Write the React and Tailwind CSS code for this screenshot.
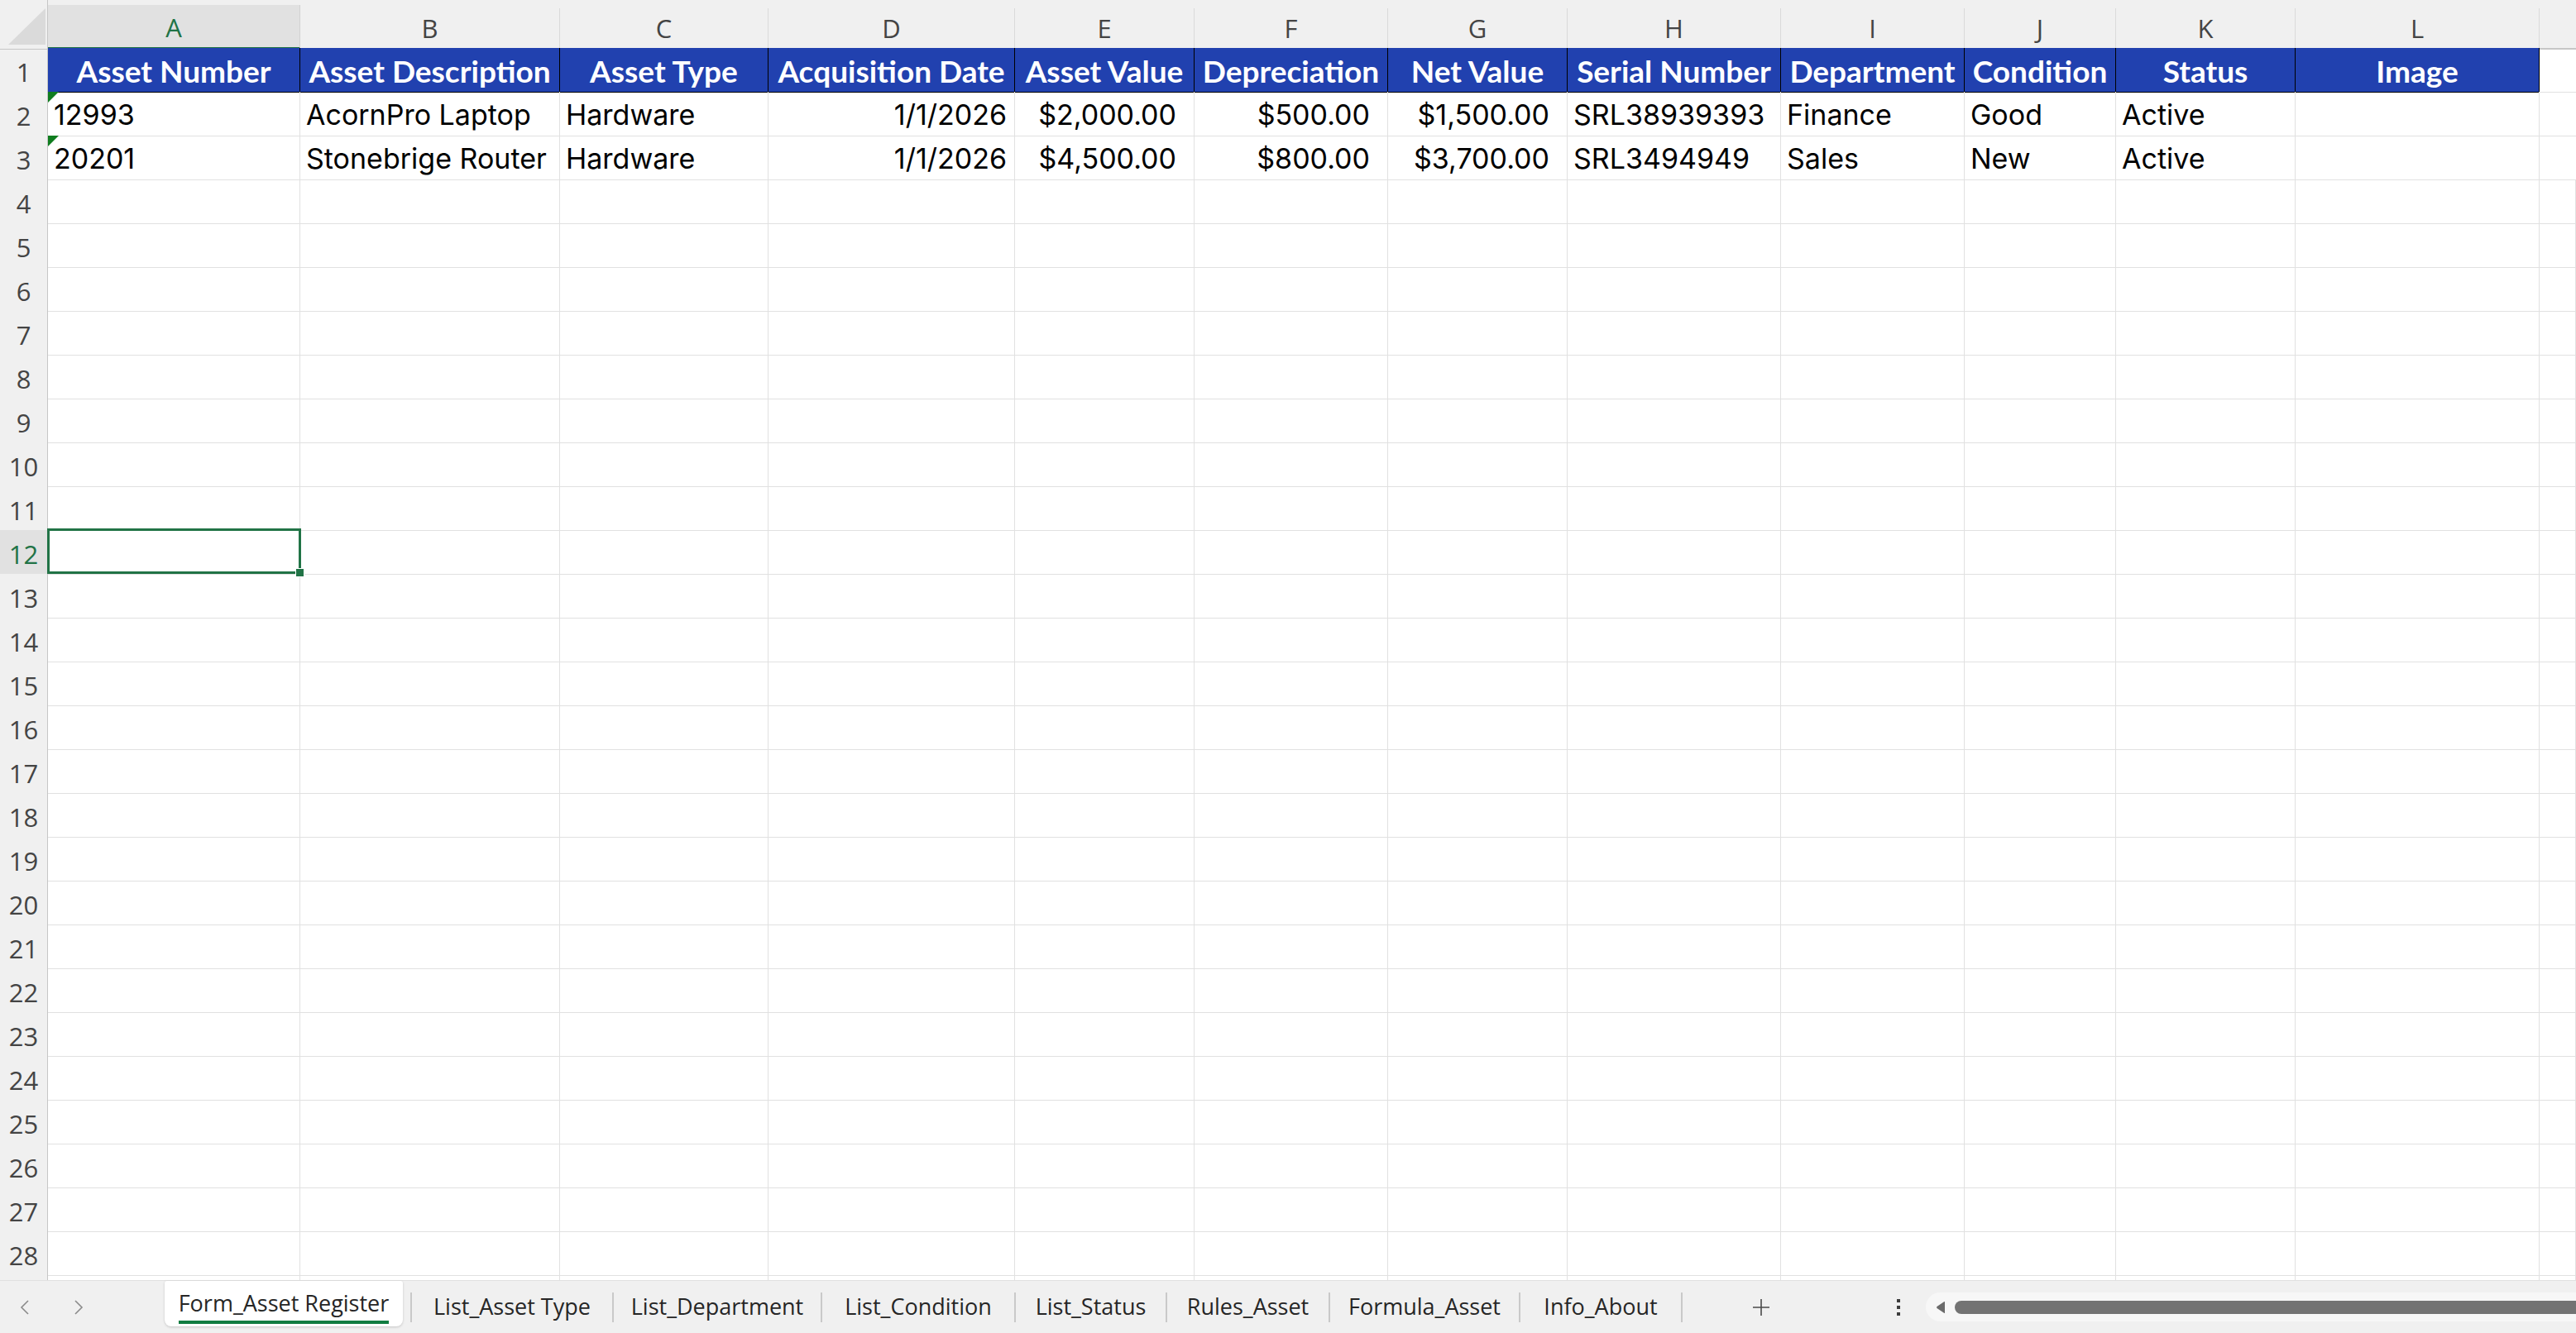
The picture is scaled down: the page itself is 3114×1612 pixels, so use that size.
import React from "react";

const GRID =
  "grid grid-cols-[58px_305px_314px_252px_298px_217px_234px_217px_258px_222px_183px_217px_295px_1fr]";

const LETTERS = ["A", "B", "C", "D", "E", "F", "G", "H", "I", "J", "K", "L"];
const HEADERS = [
  "Asset Number",
  "Asset Description",
  "Asset Type",
  "Acquisition Date",
  "Asset Value",
  "Depreciation",
  "Net Value",
  "Serial Number",
  "Department",
  "Condition",
  "Status",
  "Image",
];
const DATA = [
  ["12993", "AcornPro Laptop", "Hardware", "1/1/2026", "$2,000.00", "$500.00", "$1,500.00", "SRL38939393", "Finance", "Good", "Active", ""],
  ["20201", "Stonebrige Router", "Hardware", "1/1/2026", "$4,500.00", "$800.00", "$3,700.00", "SRL3494949", "Sales", "New", "Active", ""],
];

const uiFont = { fontFamily: '"Open Sans", "Noto Sans", sans-serif' };

function ColumnHeader() {
  return (
    <div className={`${GRID} h-[58px] shrink-0 bg-[#f0f0f0]`} style={uiFont}>
      <div className="relative border-r border-b border-[#c6c6c6]">
        <svg className="absolute inset-0" width="58" height="58" viewBox="0 0 58 58">
          <polygon points="10,54 55,54 55,10" fill="#dadada" />
        </svg>
      </div>
      {LETTERS.map((l, i) =>
        i === 0 ? (
          <div key={l} className="pt-[6px] flex flex-col">
            <div className="flex-1 bg-[#e1e1e1] border-r border-[#d2d2d2] border-b-[3px] border-b-[#217346] flex items-center justify-center pt-[4px] text-[31px] text-[#217346]">
              {l}
            </div>
          </div>
        ) : (
          <div key={l} className="pt-[10px] flex flex-col border-b-[2px] border-[#c6c6c6]">
            <div className="flex-1 border-r border-[#dadada] flex items-center justify-center text-[31px] text-[#444444]">
              {l}
            </div>
          </div>
        )
      )}
      <div className="border-b-[2px] border-[#c6c6c6]" />
    </div>
  );
}

function RowHead({ n, selected }) {
  return (
    <div
      className={`flex items-center justify-center pt-[6px] border-r border-r-[#c6c6c6] border-b border-b-[#dcdcdc] text-[31px] ${
        selected ? "bg-[#e1e1e1] text-[#217346]" : "bg-[#f0f0f0] text-[#444444]"
      }`}
      style={uiFont}
    >
      {n}
    </div>
  );
}

function HeaderRow() {
  return (
    <div className={`${GRID} h-[53px] shrink-0`}>
      <RowHead n={1} />
      {HEADERS.map((h) => (
        <div
          key={h}
          className="bg-[#2141af] border-r border-b border-black flex items-center justify-center pt-[3px] text-white font-bold text-[37px] whitespace-nowrap overflow-hidden leading-none"
          style={{ fontFamily: 'Lato, "Open Sans", sans-serif' }}
        >
          {h}
        </div>
      ))}
      <div className="border-b border-[#e1e1e1]" />
    </div>
  );
}

function DataRow({ n, values }) {
  return (
    <div className={`${GRID} h-[53px] shrink-0`}>
      <RowHead n={n} />
      {values.map((v, i) => {
        let align = "justify-start pl-[7px]";
        if (i === 3) align = "justify-end pr-[9px]";
        if (i >= 4 && i <= 6) align = "justify-end pr-[21px]";
        return (
          <div
            key={i}
            className={`relative flex items-center pt-[4px] ${align} border-r border-b border-[#e1e1e1] text-[34px] text-black whitespace-nowrap leading-none`}
            style={{ fontFamily: 'Inter, "Liberation Sans", sans-serif' }}
          >
            {i === 0 && (
              <svg className="absolute left-0 top-0" width="13" height="13" viewBox="0 0 13 13">
                <polygon points="0,0 13,0 0,13" fill="#0f7d1f" />
              </svg>
            )}
            {v}
          </div>
        );
      })}
      <div className="border-b border-[#e1e1e1]" />
    </div>
  );
}

function EmptyRow({ n }) {
  const selected = n === 12;
  return (
    <div className={`${GRID} h-[53px] shrink-0`}>
      <RowHead n={n} selected={selected} />
      {Array.from({ length: 13 }).map((_, i) => (
        <div key={i} className="relative border-r border-b border-[#e1e1e1]">
          {selected && i === 0 && (
            <div className="absolute -left-[1px] -top-[2px] w-[307px] h-[55px] border-[3px] border-[#217346] z-10">
              <div className="absolute -right-[6px] -bottom-[6px] w-[9px] h-[9px] bg-[#217346] outline outline-1 outline-white" />
            </div>
          )}
        </div>
      ))}
    </div>
  );
}

function PartialRow() {
  return (
    <div className={`${GRID} h-[53px] shrink-0`}>
      <div className="bg-[#f0f0f0] border-r border-[#c6c6c6]" />
      {Array.from({ length: 13 }).map((_, i) => (
        <div key={i} className="border-r border-[#e1e1e1]" />
      ))}
    </div>
  );
}

function Chevron({ dir }) {
  return (
    <svg width="14" height="20" viewBox="0 0 14 20">
      <path
        d={dir === "left" ? "M11 2 L3 10 L11 18" : "M3 2 L11 10 L3 18"}
        fill="none"
        stroke="#8a8a8a"
        strokeWidth="1.6"
      />
    </svg>
  );
}

function Sep() {
  return <div className="w-[2px] h-[36px] bg-[#c9c9c9] shrink-0" />;
}

const TABS = [
  ["List_Asset Type", "w-[242px]"],
  ["List_Department", "w-[250px]"],
  ["List_Condition", "w-[232px]"],
  ["List_Status", "w-[181px]"],
  ["Rules_Asset", "w-[195px]"],
  ["Formula_Asset", "w-[228px]"],
  ["Info_About", "w-[194px]"],
];

function TabBar() {
  return (
    <div
      className="h-[64px] shrink-0 bg-[#f0f0f0] border-t border-[#e0e0e0] flex items-center text-[27px] text-[#262626]"
      style={uiFont}
    >
      <div className="w-[199px] shrink-0 flex items-center pl-[23px] gap-[51px]">
        <Chevron dir="left" />
        <Chevron dir="right" />
      </div>
      <div className="w-[288px] h-[55px] self-start shrink-0 bg-white rounded-b-[8px] rounded-t-[3px] shadow-[0_1px_3px_rgba(0,0,0,0.18)] flex items-center justify-center">
        <span className="relative leading-none pb-[2px]">
          Form_Asset Register
          <span className="absolute left-0 right-0 -bottom-[10px] h-[4px] bg-[#107c41]" />
        </span>
      </div>
      <div className="w-[9px] shrink-0" />
      <Sep />
      {TABS.map(([t, w]) => (
        <React.Fragment key={t}>
          <div className={`${w} shrink-0 flex items-center justify-center whitespace-nowrap`}>{t}</div>
          <Sep />
        </React.Fragment>
      ))}
      <div className="w-[190px] shrink-0 flex items-center justify-center">
        <svg width="22" height="22" viewBox="0 0 22 22">
          <path d="M11 1 V21 M1 11 H21" stroke="#4a4a4a" strokeWidth="1.6" />
        </svg>
      </div>
      <div className="w-[61px] shrink-0" />
      <div className="w-[20px] shrink-0 flex flex-col items-center gap-[4px]">
        <div className="w-[4px] h-[4px] bg-[#3c3c3c]" />
        <div className="w-[4px] h-[4px] bg-[#3c3c3c]" />
        <div className="w-[4px] h-[4px] bg-[#3c3c3c]" />
      </div>
      <div className="w-[23px] shrink-0" />
      <div className="flex-1 h-[35px] rounded-l-full bg-[#f7f7f7] flex items-center pl-[11px] gap-[10px]">
        <svg width="14" height="16" viewBox="0 0 14 16">
          <path d="M12 1.5 Q12 0.5 11 1.2 L2.5 7 Q1.5 8 2.5 9 L11 14.8 Q12 15.5 12 14.5 Z" fill="#6b6b6b" />
        </svg>
        <div className="flex-1 h-[16px] rounded-l-full bg-[#737373]" />
      </div>
    </div>
  );
}

export default function App() {
  const empties = [];
  for (let n = 4; n <= 28; n++) empties.push(<EmptyRow key={n} n={n} />);
  return (
    <div className="w-[3114px] h-[1612px] overflow-hidden bg-white flex flex-col">
      <div className="h-[1548px] shrink-0 overflow-hidden flex flex-col">
        <ColumnHeader />
        <HeaderRow />
        {DATA.map((r, i) => (
          <DataRow key={i} n={i + 2} values={r} />
        ))}
        {empties}
        <PartialRow />
      </div>
      <TabBar />
    </div>
  );
}
